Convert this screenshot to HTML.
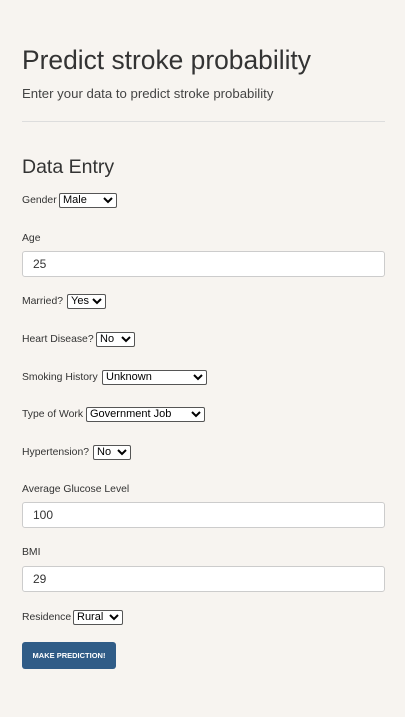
<!DOCTYPE html>
<html><head><style>
body{margin:0;background:#f7f4f0;font-family:"Liberation Sans",sans-serif;color:#333;width:405px;height:717px;position:relative;overflow:hidden}
.a{position:absolute;white-space:nowrap}
.l{font-size:10.4px;color:#333;margin-top:1px}
.s{position:absolute;height:13px;border:1px solid #555;border-radius:2px;background:#fff;font-size:11px;line-height:13px;padding-left:3px;box-sizing:content-box;color:#000}
.s svg{position:absolute;right:3px;top:3px}
.i{position:absolute;left:22px;border:1px solid #ccc;border-radius:3px;background:#fff;font-size:12px;line-height:24px;padding-left:10px;box-sizing:border-box;height:26px;width:363px}
</style></head><body>
<div class="a" style="left:22px;top:45px;font-size:26.4px;color:#333">Predict stroke probability</div>
<div class="a" style="left:22px;top:86px;font-size:13.2px;color:#444">Enter your data to predict stroke probability</div>
<div class="a" style="left:22px;top:121px;width:363px;height:1px;background:#ddd"></div>
<div class="a" style="left:22px;top:156px;font-size:19.5px;color:#333">Data Entry</div>
<div class="a l" style="left:22px;top:194px">Gender</div>
<div class="s" style="left:59px;top:193px;width:53px">Male<svg width="10" height="7"><path d="M1 1L5 5L9 1" stroke="#000" stroke-width="2" fill="none"/></svg></div>
<div class="a l" style="left:22px;top:232px">Age</div>
<div class="i" style="top:251px">25</div>
<div class="a l" style="left:22px;top:295px">Married?</div>
<div class="s" style="left:67px;top:294px;width:34px">Yes<svg width="10" height="7"><path d="M1 1L5 5L9 1" stroke="#000" stroke-width="2" fill="none"/></svg></div>
<div class="a l" style="left:22px;top:333px">Heart Disease?</div>
<div class="s" style="left:96px;top:332px;width:34px">No<svg width="10" height="7"><path d="M1 1L5 5L9 1" stroke="#000" stroke-width="2" fill="none"/></svg></div>
<div class="a l" style="left:22px;top:371px">Smoking History</div>
<div class="s" style="left:102px;top:370px;width:100px">Unknown<svg width="10" height="7"><path d="M1 1L5 5L9 1" stroke="#000" stroke-width="2" fill="none"/></svg></div>
<div class="a l" style="left:22px;top:408px">Type of Work</div>
<div class="s" style="left:86px;top:407px;width:114px">Government Job<svg width="10" height="7"><path d="M1 1L5 5L9 1" stroke="#000" stroke-width="2" fill="none"/></svg></div>
<div class="a l" style="left:22px;top:446px">Hypertension?</div>
<div class="s" style="left:93px;top:445px;width:33px">No<svg width="10" height="7"><path d="M1 1L5 5L9 1" stroke="#000" stroke-width="2" fill="none"/></svg></div>
<div class="a l" style="left:22px;top:483px">Average Glucose Level</div>
<div class="i" style="top:502px">100</div>
<div class="a l" style="left:22px;top:546px">BMI</div>
<div class="i" style="top:566px">29</div>
<div class="a l" style="left:22px;top:611px">Residence</div>
<div class="s" style="left:73px;top:610px;width:45px">Rural<svg width="10" height="7"><path d="M1 1L5 5L9 1" stroke="#000" stroke-width="2" fill="none"/></svg></div>
<div class="a" style="left:22px;top:642px;width:94px;height:27px;background:#305c87;border-radius:3px;color:#fff;font-size:7.5px;font-weight:bold;line-height:27px;text-align:center">MAKE PREDICTION!</div>
</body></html>
